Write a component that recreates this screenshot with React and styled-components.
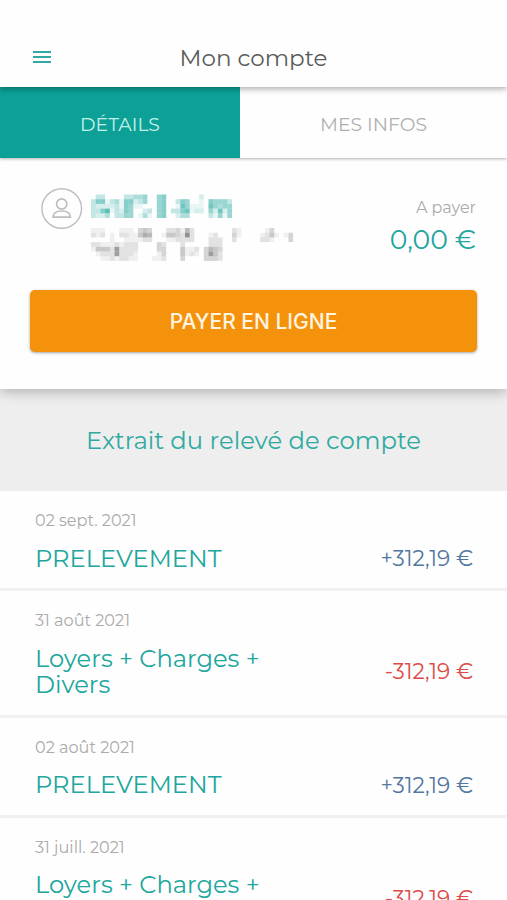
import {useState} from "react";
import styled, {createGlobalStyle} from "styled-components";

const GlobalStyle = createGlobalStyle`
  * {
    box-sizing: border-box;
  }

  body {
    margin: 0;
    background: #fefefe;
    overflow: hidden;
    font-family: "Montserrat", "Inter", "Liberation Sans", sans-serif;
  }
`;

const Page = styled.div`
  width: 100%;
  height: 900px;
  overflow: hidden;
`;

const Header = styled.header`
  position: relative;
  z-index: 2;
  display: grid;
  grid-template-columns: 60px 1fr 60px;
  align-items: center;
  height: 87px;
  padding-top: 27px;
  background: #fefefe;
  box-shadow: 0 2px 6px rgba(0, 0, 0, 0.32);

  h1 {
    margin: 0;
    padding-top: 1px;
    text-align: center;
    font-size: 23px;
    font-weight: 400;
    color: #5a5a5a;
  }
`;

const MenuButton = styled.button`
  display: flex;
  flex-direction: column;
  gap: 3px;
  width: 18px;
  margin-left: 33px;
  padding: 0;
  border: none;
  background: none;

  span {
    height: 2px;
    background: #2fa9a1;
  }
`;

const Tabs = styled.nav`
  position: relative;
  z-index: 1;
  display: grid;
  grid-template-columns: 240px 1fr;
  height: 71px;
  box-shadow: 0 1px 3px rgba(0, 0, 0, 0.3);
`;

const Tab = styled.button`
  padding: 3px 0 0;
  border: none;
  font-family: inherit;
  font-size: 18.8px;
  font-weight: 400;
  color: ${props => props.$active ? "#c4f0ea" : "#b0b0b0"};
  background: ${props => props.$active ? "#0ca096" : "#fefefe"};
`;

const Account = styled.section`
  position: relative;
  height: 231px;
  padding: 29px 30px 0;
  background: #fefefe;
  box-shadow: 0 3px 12px rgba(0, 0, 0, 0.26);
`;

const Owner = styled.div`
  display: flex;
  height: 103px;
  padding-left: 11px;
`;

const Avatar = styled.svg`
  width: 42px;
  height: 42px;
  flex: none;
`;

const Masked = styled.svg`
  width: 208px;
  height: 68px;
  margin: 7px 0 0 8px;
  flex: none;
`;

const Balance = styled.div`
  margin: 10px 1px 0 auto;
  text-align: right;
  white-space: nowrap;

  small {
    display: block;
    font-size: 16px;
    line-height: 22px;
    color: #ababab;
  }

  strong {
    display: block;
    margin-top: 4px;
    font-size: 26.7px;
    line-height: 34px;
    font-weight: 400;
    color: #20a69d;
  }
`;

const PayButton = styled.button`
  width: 100%;
  height: 62px;
  padding: 0;
  border: none;
  border-radius: 5px;
  background: #f4920b;
  box-shadow: 0 1px 3px rgba(0, 0, 0, 0.36);
  font-family: "Inter", "Liberation Sans", sans-serif;
  font-size: 21px;
  font-weight: 500;
  color: #fff4e0;
`;

const StatementTitle = styled.h2`
  display: flex;
  align-items: center;
  justify-content: center;
  height: 102px;
  margin: 0;
  padding-bottom: 1px;
  background: #eeeeee;
  font-size: 24.3px;
  font-weight: 400;
  color: #30aaa1;
`;

const Row = styled.article`
  padding: 20px 34px 16px 35px;
  border-bottom: 3px solid #f1f1f1;

  time {
    display: block;
    height: 20px;
    font-size: 16.1px;
    line-height: 19px;
    color: #ababab;
  }
`;

const Line = styled.div`
  display: flex;
  align-items: center;
  justify-content: space-between;
  margin-top: 14.5px;
`;

const Label = styled.span`
  width: 240px;
  font-size: 24.2px;
  line-height: 26.5px;
  color: #20a69d;
`;

const Amount = styled.span`
  font-size: 21.6px;
  line-height: 26px;
  margin-top: -1.5px;
  white-space: nowrap;
  color: ${props => props.$negative ? "#dc4b49" : "#53769f"};
`;

// one string per column, one digit (opacity) per cell
const NAME = [
    "03333", "36232", "36262", "01284", "03210", "04333", "01123", "36665",
    "36555", "42100", "43101", "55024", "00031", "00000", "55555", "66666",
    "00000", "00030", "03132", "06764", "05574", "00110", "00120", "21120",
    "00000", "06753", "05521", "05475", "05521", "03555",
];
const ADDRESS = [
    "1202100", "1102410", "1201421", "0001421", "0111222", "0002771", "1201222",
    "1212222", "1112221", "0112211", "3410000", "4620000", "3520000", "0000001",
    "0003311", "0102332", "2410000", "2410000", "3320000", "1222443", "5820110",
    "2220120", "0000210", "0000000", "0000333", "0122573", "0222443", "0022322",
    "0000000", "0000000", "2320000", "1100000", "0000000", "0000000", "0000000",
    "0000000", "0120000", "1220000", "3410000", "0100000", "0000000", "0100000",
    "0330000",
];

const CELL = 4.7;

function Cells({columns, top, color, strength}) {
    return columns.map((column, x) => [...column].map((level, y) => (
        level !== "0" && (
            <rect
                key={`${x}-${y}`}
                x={x * CELL}
                y={top + y * CELL}
                width={CELL}
                height={CELL}
                fill={color}
                fillOpacity={level * strength}
            />
        )
    )));
}

const operations = [
    {date: "02 sept. 2021", label: "PRELEVEMENT", amount: "+312,19 €"},
    {date: "31 août 2021", label: "Loyers + Charges + Divers", amount: "-312,19 €"},
    {date: "02 août 2021", label: "PRELEVEMENT", amount: "+312,19 €"},
    {date: "31 juill. 2021", label: "Loyers + Charges + Divers", amount: "-312,19 €"},
];

function Operation({date, label, amount}) {
    return (
        <Row>
            <time>{date}</time>
            <Line>
                <Label>{label}</Label>
                <Amount $negative={amount.startsWith("-")}>{amount}</Amount>
            </Line>
        </Row>
    );
}

function App() {
    const [tab, setTab] = useState("details");

    return (
        <Page>
            <GlobalStyle/>
            <Header>
                <MenuButton aria-label="Menu">
                    <span/>
                    <span/>
                    <span/>
                </MenuButton>
                <h1>Mon compte</h1>
            </Header>
            <Tabs>
                <Tab $active={tab === "details"} onClick={() => setTab("details")}>DÉTAILS</Tab>
                <Tab $active={tab === "infos"} onClick={() => setTab("infos")}>MES INFOS</Tab>
            </Tabs>
            <Account>
                <Owner>
                    <Avatar viewBox="0 0 42 42" fill="none" stroke="#bdbdc0">
                        <circle cx="20.7" cy="21.5" r="19.8" strokeWidth="1.4"/>
                        <circle cx="20.7" cy="17" r="5.1" strokeWidth="1.7"/>
                        <path d="M12 30.2c.2-4 3.3-6.2 8.7-6.2s8.5 2.2 8.7 6.2z" strokeWidth="1.7" strokeLinejoin="round"/>
                    </Avatar>
                    <Masked viewBox="0 0 208 68">
                        <Cells columns={NAME} top={0.5} color="#119f95" strength={0.085}/>
                        <Cells columns={ADDRESS} top={34} color="#3c3c3c" strength={0.07}/>
                    </Masked>
                    <Balance>
                        <small>A payer</small>
                        <strong>0,00 €</strong>
                    </Balance>
                </Owner>
                <PayButton>PAYER EN LIGNE</PayButton>
            </Account>
            <StatementTitle>Extrait du relevé de compte</StatementTitle>
            {operations.map(operation => (
                <Operation key={operation.date} {...operation}/>
            ))}
        </Page>
    );
}

export default App;
